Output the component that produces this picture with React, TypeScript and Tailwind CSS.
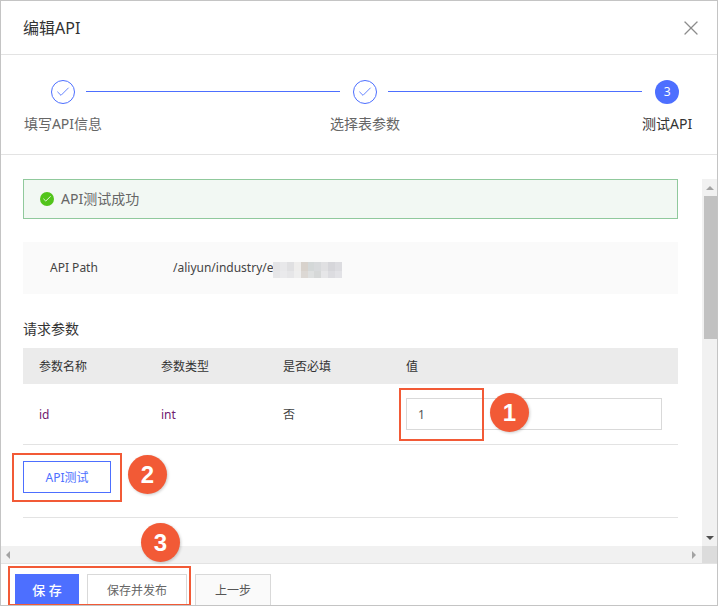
import { Check, X } from 'lucide-react';

const font = 'font-["Noto_Sans","Noto_Sans_CJK_SC",sans-serif]';

const blurCells = [
  '#e4e4e6', '#e8e8ea', '#e0e0e2', '#eeedec', '#d8d2cc', '#d4d8d8', '#d8dadc', '#e0e0e2', '#d6d6da', '#dcdce0',
  '#e6e6e8', '#eaeaec', '#e6e6e8', '#eeeeee', '#dcd8d4', '#dee0e0', '#d6d8d8', '#e6e6e8', '#dcdce0', '#e2e2e6',
];

const StepCircle = () => (
  <div className="flex h-6 w-6 items-center justify-center rounded-full border border-[#4d6fff] text-[#4d6fff]">
    <Check size={16} strokeWidth={1.3} />
  </div>
);

const Step = ({ label }: { label: string }) => (
  <div className="flex w-[78px] shrink-0 flex-col items-center">
    <StepCircle />
    <span className="mt-[10px] text-[14px] leading-[20px] whitespace-nowrap text-[#666]">{label}</span>
  </div>
);

const Callout = ({ n, className }: { n: string; className: string }) => (
  <div
    className={`absolute flex h-[39px] w-[39px] items-center justify-center rounded-full bg-[#f25a36] font-["Liberation_Sans",sans-serif] text-[24px] font-bold text-white shadow-[1px_1px_3px_rgba(0,0,0,0.2)] ${className}`}
  >
    {n}
  </div>
);

export default function App() {
  return (
    <div className={`relative flex h-[606px] w-[718px] flex-col overflow-hidden border border-[#c4c4c4] bg-white ${font}`}>
      {/* Header */}
      <div className="flex h-[54px] shrink-0 items-center justify-between border-b border-[#e3e3e3] pl-[22px] pr-[14px]">
        <h1 className="text-[16px] font-normal text-[#333]">编辑API</h1>
        <X size={24} strokeWidth={1.3} className="text-[#8c8c8c]" />
      </div>

      {/* Steps */}
      <div className="flex h-[100px] shrink-0 items-start border-b border-[#e3e3e3] pl-[23px] pr-[25px] pt-[25px]">
        <Step label="填写API信息" />
        <div className="mt-[11px] ml-[-16px] h-px w-[254px] shrink-0 bg-[#4d6fff]" />
        <div className="ml-[-14px]">
          <Step label="选择表参数" />
        </div>
        <div className="mt-[11px] ml-[-16px] h-px w-[254px] shrink-0 bg-[#4d6fff]" />
        <div className="flex flex-1 flex-col items-end">
          <div className="mr-[13px] flex h-6 w-6 items-center justify-center rounded-full bg-[#4d6fff] text-[12px] text-white">3</div>
          <span className="mt-[10px] text-[14px] leading-[20px] whitespace-nowrap text-[#333]">测试API</span>
        </div>
      </div>

      {/* Body */}
      <div className="flex min-h-0 flex-1 flex-col pt-[24px]">
        <div className="flex min-h-0 flex-1">
          <div className="min-w-0 flex-1 pl-[22px] pr-[24px]">
            <div className="flex h-[40px] items-center gap-[7px] border border-[#90c99c] bg-[#f2f8f3] pl-4">
              <span className="flex h-[14px] w-[14px] items-center justify-center rounded-full bg-[#52c41a] text-white">
                <Check size={10} strokeWidth={2} />
              </span>
              <span className="mb-[2px] text-[14px] text-[#666]">API测试成功</span>
            </div>

            <div className="relative mt-[23px] flex h-[52px] items-center bg-[#fafafa] pl-[27px] text-[12px] text-[#444]">
              <span className="w-[123px]">API Path</span>
              <span>/aliyun/industry/e</span>
              {/* redacted part of the path */}
              <div className="absolute left-[250px] top-[20px] grid h-[16px] w-[69px] grid-cols-10 grid-rows-[9px_7px]">
                {blurCells.map((c, i) => (
                  <div key={i} style={{ backgroundColor: c }} />
                ))}
              </div>
            </div>

            <div className="mt-[25px] text-[14px] leading-[20px] text-[#333]">请求参数</div>

            <div className="mt-[9px] flex h-[36px] items-center bg-[#ebebeb] pt-[2px] text-[12px] text-[#333]">
              <div className="w-[122px] pl-4">参数名称</div>
              <div className="w-[122px] pl-4">参数类型</div>
              <div className="w-[123px] pl-4">是否必填</div>
              <div className="pl-4">值</div>
            </div>
            <div className="flex h-[61px] items-center border-b border-[#e3e3e3] text-[12px]">
              <div className="w-[122px] pl-4 pt-[2px] text-[#70206f]">id</div>
              <div className="w-[122px] pl-4 pt-[2px] text-[#70206f]">int</div>
              <div className="w-[123px] pl-4 pt-[2px] text-[#444]">否</div>
              <div className="ml-4 flex h-8 w-[256px] items-center border border-[#d9d9d9] pl-[11px] pt-[2px] text-[#555]">1</div>
            </div>

            <button className="mt-4 block h-8 w-[88px] border border-[#4d6fff] pt-[2px] text-[12px] text-[#4d6fff]">API测试</button>
            <div className="mt-[24px] h-px bg-[#e3e3e3]" />
          </div>

          {/* Vertical scrollbar */}
          <div className="flex w-[15px] shrink-0 flex-col bg-[#f1f1f1]">
            <div className="flex h-[17px] items-center justify-center">
              <div className="h-0 w-0 border-x-[4px] border-b-[4px] border-x-transparent border-b-[#a3a3a3]" />
            </div>
            <div className="ml-[2px] h-[143px] bg-[#c1c1c1]" />
            <div className="flex-1" />
            <div className="flex h-[17px] items-center justify-center">
              <div className="h-0 w-0 border-x-[4px] border-t-[4px] border-x-transparent border-t-[#505050]" />
            </div>
          </div>
        </div>

        {/* Horizontal scrollbar */}
        <div className="flex h-[17px] shrink-0 items-center bg-[#f1f1f1]">
          <div className="ml-[5px] h-0 w-0 border-y-[4px] border-r-[4px] border-y-transparent border-r-[#a3a3a3]" />
          <div className="flex-1" />
          <div className="mr-[6px] h-0 w-0 border-y-[4px] border-l-[4px] border-y-transparent border-l-[#a3a3a3]" />
          <div className="h-full w-[15px] bg-[#dcdcdc]" />
        </div>
      </div>

      {/* Footer */}
      <div className="flex h-[42px] shrink-0 gap-2 border-t border-[#e3e3e3] pl-[14px] pt-[10px] text-[12px]">
        <button className="h-10 w-[64px] bg-[#4d6fff] pb-[7px] text-[13px] font-medium text-white">保 存</button>
        <button className="h-10 w-[100px] border border-[#d9d9d9] pb-[7px] text-[#666]">保存并发布</button>
        <button className="h-10 w-[76px] border border-[#d9d9d9] bg-[#fafafa] pb-[7px] text-[#555]">上一步</button>
      </div>

      {/* Annotations */}
      <div className="absolute left-[398px] top-[387px] h-[53px] w-[85px] border-2 border-[#f25a36]" />
      <div className="absolute left-[11px] top-[452px] h-[49px] w-[110px] border-2 border-[#f25a36]" />
      <div className="absolute left-[7px] top-[565px] h-[40px] w-[183px] border-2 border-[#f25a36]" />
      <Callout n="1" className="left-[489px] top-[392px]" />
      <Callout n="2" className="left-[127px] top-[454px]" />
      <Callout n="3" className="left-[140px] top-[522px]" />
    </div>
  );
}
